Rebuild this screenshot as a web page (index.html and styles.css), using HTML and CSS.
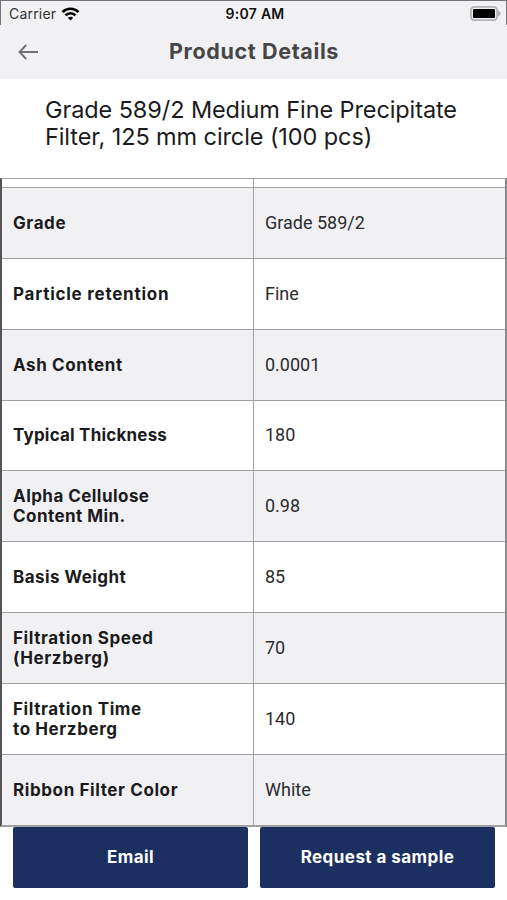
FILE: index.html
```
<!DOCTYPE html>
<html lang="en">
<head>
  <meta charset="UTF-8" />
  <meta name="viewport" content="width=device-width, initial-scale=1.0"/>
  <title>Product Details</title>
  <link rel="stylesheet" href="styles.css">
</head>
<body>

  <div class="top">
    <div class="status-bar">
      <div class="carrier">
        <span>Carrier</span>
        <svg class="wifi" width="19" height="14" viewBox="0 0 18 14" fill="none" stroke="#000" stroke-width="2.5">
          <path d="M1 5.2C5.4.7 12.6.7 17 5.2"/>
          <path d="M4 8.4c2.8-2.9 7.200-2.900 10 0"/>
          <path d="M9 13.600l-2.700-2.800c1.500-1.500 3.900-1.500 5.400 0z" fill="#000" stroke="none"/>
        </svg>
      </div>
      <div class="time">9:07 AM</div>
      <div class="battery">
        <svg width="31" height="15" viewBox="0 0 31 15">
          <rect x="0.900" y="0.900" width="26.200" height="13.200" rx="3.500" fill="#f1f1f4" stroke="#b4b4b6" stroke-width="1.800"/>
          <rect x="3" y="3" width="22" height="9" rx="1" fill="#000"/>
          <path d="M28 4.500c1.500.500 2.500 1.500 2.500 3s-1 2.500-2.500 3z" fill="#b4b4b6"/>
        </svg>
      </div>
    </div>
    <div class="nav">
      <svg class="back" width="22" height="16" viewBox="0 0 22 16" fill="none" stroke="#717173" stroke-width="1.900">
        <path d="M8.200 1L1.500 8l6.700 7M1.500 8H20"/>
      </svg>
      <h1>Product Details</h1>
    </div>
  </div>

  <h2 class="product-name">Grade 589/2 Medium Fine Precipitate<br>Filter, 125 mm circle (100 pcs)</h2>

  <div class="specs">
    <div class="row empty"><div class="label"></div><div class="value"></div></div>
    <div class="row shaded"><div class="label">Grade</div><div class="value">Grade 589/2</div></div>
    <div class="row"><div class="label wide">Particle retention</div><div class="value">Fine</div></div>
    <div class="row shaded"><div class="label">Ash Content</div><div class="value">0.0001</div></div>
    <div class="row short"><div class="label tight">Typical Thickness</div><div class="value">180</div></div>
    <div class="row shaded"><div class="label snug">Alpha Cellulose<br>Content Min.</div><div class="value">0.98</div></div>
    <div class="row"><div class="label snug">Basis Weight</div><div class="value">85</div></div>
    <div class="row shaded"><div class="label">Filtration Speed<br>(Herzberg)</div><div class="value">70</div></div>
    <div class="row"><div class="label">Filtration Time<br>to Herzberg</div><div class="value">140</div></div>
    <div class="row shaded"><div class="label">Ribbon Filter Color</div><div class="value">White</div></div>
  </div>

  <div class="actions">
    <button>Email</button>
    <button>Request a sample</button>
  </div>

</body>
</html>
```

FILE: styles.css
```
* {
  box-sizing: border-box;
  margin: 0;
  padding: 0;
}

body {
  background-color: #fff;
  color: #1b1b1d;
  font-family: Inter, Roboto, sans-serif;
  height: 900px;
  overflow: hidden;
}

.top {
  height: 79px;
  background-color: #f1f1f4;
}

.status-bar {
  display: flex;
  align-items: center;
  height: 25px;
  border: 1px solid #757577;
  border-bottom: none;
  padding: 1px 5px 0 8px;
  font-size: 14px;
}

.carrier {
  display: flex;
  flex: 1;
  align-items: center;
  gap: 5px;
  color: #333335;
  letter-spacing: 0.2px;
}

.time {
  color: #111;
  font-weight: 600;
  letter-spacing: 0.3px;
}

.battery {
  display: flex;
  flex: 1;
  justify-content: flex-end;
}

.nav {
  display: flex;
  align-items: center;
  height: 54px;
  padding: 0 18px;
}

.nav h1 {
  flex: 1;
  padding: 0 21px 2px 0;
  text-align: center;
  font-size: 21.5px;
  line-height: 26px;
  letter-spacing: 0.65px;
  color: #464648;
}

.product-name {
  height: 99px;
  padding: 17px 0 0 45px;
  font-size: 23.5px;
  font-weight: 400;
  line-height: 27px;
  letter-spacing: -0.1px;
  white-space: nowrap;
}

.specs {
  border: 2px solid #a0a0a2;
  border-top-width: 1px;
  border-left-color: #555557;
  border-right-color: #8a8a8c;
}

.row {
  display: flex;
  height: 71px;
  border-top: 1px solid #a0a0a2;
}

.row.empty {
  height: 8px;
  border-top: none;
}

.row.short {
  height: 70px;
}

.row.shaded {
  background-color: #f1f1f4;
}

.label,
.value {
  display: flex;
  align-items: center;
  padding-bottom: 1px;
  line-height: 20px;
}

.label {
  width: 252px;
  padding-left: 11px;
  border-right: 1px solid #a0a0a2;
  font-size: 17px;
  font-weight: 700;
  letter-spacing: 0.6px;
}

.label.wide {
  letter-spacing: 0.75px;
}

.label.snug {
  letter-spacing: 0.45px;
}

.label.tight {
  letter-spacing: 0.2px;
}

.value {
  flex: 1;
  padding-left: 11px;
  font-family: Roboto, sans-serif;
  font-size: 18px;
  color: #2b2b2d;
}

.actions {
  display: flex;
  gap: 12px;
  padding: 0 12px 0 13px;
}

.actions button {
  flex: 1;
  height: 61px;
  padding-bottom: 2px;
  border: none;
  border-radius: 2px;
  background-color: #1b3060;
  color: #fff;
  font-family: inherit;
  font-size: 17px;
  font-weight: 700;
  letter-spacing: 0.45px;
}
```
